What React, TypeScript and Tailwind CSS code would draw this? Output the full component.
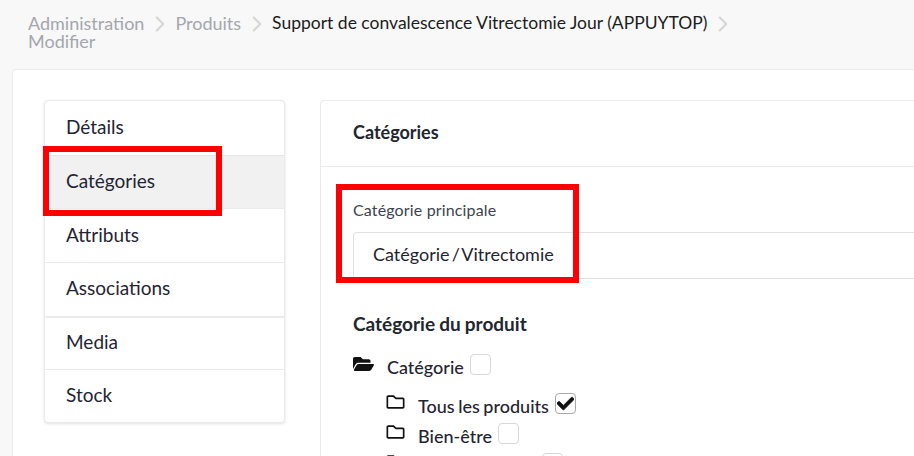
import { FaFolderOpen, FaRegFolder, FaCheck } from "react-icons/fa";
import { LuChevronRight } from "react-icons/lu";

function Sep() {
  return <LuChevronRight className="mx-[2.5px] -mt-[3px] -mb-[5px] inline-block h-[26px] w-[26px] align-top text-[#d6d6d6]" />;
}

function Box({ checked = false }: { checked?: boolean }) {
  return (
    <span className={`flex h-[21px] w-[21px] shrink-0 items-center justify-center rounded-[4px] border bg-white ${checked ? "border-[#a9a9a9]" : "border-[#d8d8d8]"}`}>
      {checked && <FaCheck className="h-[17px] w-[17px] text-[#111]" stroke="currentColor" strokeWidth={24} />}
    </span>
  );
}

const items = [
  { t: "Détails", c: "h-[54px] pb-[2px]" },
  { t: "Catégories", c: "h-[53px] pb-[2px] border-t border-[#e6e6e6] bg-[#f1f1f1]" },
  { t: "Attributs", c: "h-[54px] border-t border-[#ebebeb]" },
  { t: "Associations", c: "h-[54px] pb-[2px] border-t border-[#ebebeb]" },
  { t: "Media", c: "h-[53px] pb-[2px] border-t-2 border-[#ebebeb]" },
  { t: "Stock", c: "h-[53px] pb-[2px] border-t border-[#ebebeb]" },
];

export default function App() {
  return (
    <div className="relative h-[456px] w-[914px] overflow-hidden bg-[#f8f8f8] font-['Lato','Carlito',sans-serif] text-[#1f2433]">
      <div className="h-[69px] px-[28px] pt-[14px] text-[18px] leading-[18px] text-[#a3a7ad]">
        <span>Administration</span>
        <Sep />
        <span>Produits</span>
        <Sep />
        <span className="align-top text-[17.5px] text-[#1b1d22]">Support de convalescence Vitrectomie Jour (APPUYTOP)</span>
        <Sep />
        <br />
        <span>Modifier</span>
      </div>
      <div className="ml-[12px] flex h-[387px] gap-[35px] rounded-tl-[4px] border-l border-t border-[#ebebeb] bg-white pl-[31px] pt-[30px]">
        <div className="h-[323px] w-[241px] shrink-0 overflow-hidden rounded-[4px] border border-[#ebebeb] bg-white shadow-[0_1px_3px_rgba(0,0,0,0.12)]">
          {items.map(({ t, c }) => (
            <div key={t} className={`flex items-center pl-[21px] text-[19px] ${c}`}>
              {t}
            </div>
          ))}
        </div>
        <div className="flex-1 rounded-tl-[4px] border-l border-t border-[#ebebeb] bg-white">
          <div className="flex h-[66px] items-center border-b border-[#ebebeb] pb-[2px] pl-[32px] text-[18px] font-bold text-[#222630]">
            Catégories
          </div>
          <div className="pl-[32px] pt-[34px]">
            <div className="text-[16px] leading-[18px] tracking-[0.15px] text-[#3d4350]">Catégorie principale</div>
            <div className="mt-[13px] flex h-[47px] items-center rounded-tl-[4px] rounded-bl-[4px] border border-r-0 border-[#e0e0e0] pb-[2px] pl-[19px] text-[18px] [word-spacing:-2.5px]">
              Catégorie / Vitrectomie
            </div>
            <div className="mt-[34px] text-[19px] font-bold leading-[22px] text-[#222630] [word-spacing:-0.5px]">Catégorie du produit</div>
            <div className="mt-[17px] flex h-[24px] items-center">
              <FaFolderOpen className="mr-[13px] h-[20px] w-[21px] text-[#111]" />
              <span className="mr-[6px] translate-y-[3px] text-[18px] font-medium">Catégorie</span>
              <Box />
            </div>
            <div className="pl-[33px] pt-[15px]">
              <div className="flex h-[24px] items-center">
                <FaRegFolder className="mr-[13px] h-[18px] w-[19px] -translate-y-[1px] text-[#111]" />
                <span className="mr-[6px] translate-y-[3px] text-[18px] font-medium [word-spacing:-1px]">Tous les produits</span>
                <Box checked />
              </div>
              <div className="mt-[6px] flex h-[24px] items-center">
                <FaRegFolder className="mr-[13px] h-[18px] w-[19px] -translate-y-[1px] text-[#111]" />
                <span className="mr-[6px] translate-y-[3px] text-[18px] font-medium">Bien-être</span>
                <Box />
              </div>
              <div className="mt-[6px] flex h-[24px] items-center">
                <FaRegFolder className="mr-[13px] h-[18px] w-[19px] -translate-y-[1px] text-[#111]" />
                <span className="mr-[6px] w-[118px]" />
                <Box />
              </div>
            </div>
          </div>
        </div>
      </div>
      <div className="absolute left-[43px] top-[146px] h-[70px] w-[179px] border-[6px] border-[#ff0000]" />
      <div className="absolute left-[336px] top-[184px] h-[99px] w-[243px] border-[6px] border-[#ff0000]" />
    </div>
  );
}
